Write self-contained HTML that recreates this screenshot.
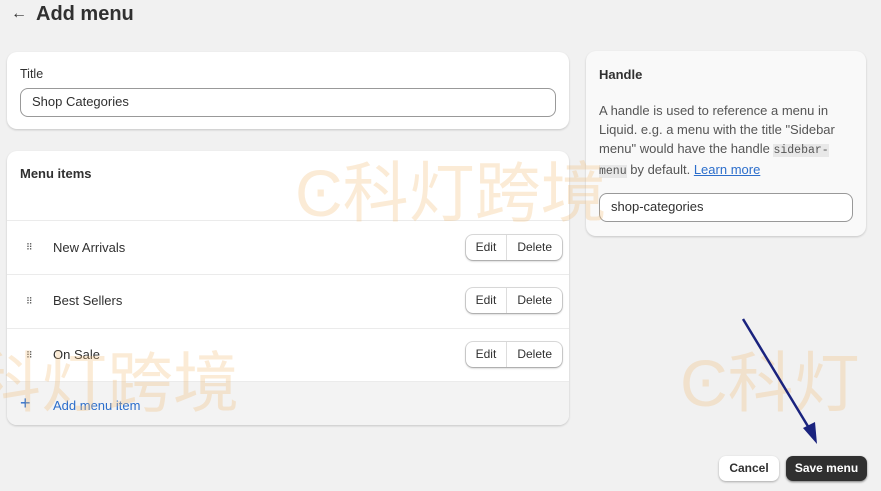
<!DOCTYPE html>
<html><head><style>
body{margin:0;width:881px;height:491px;background:#f1f1f1;font-family:"Liberation Sans","Noto Sans CJK SC",sans-serif;position:relative;overflow:hidden;color:#303030}
.a{position:absolute}
.card{position:absolute;background:#fff;border-radius:10px;box-shadow:0 1px 2px rgba(0,0,0,.18)}
.inp{position:absolute;border:1px solid #999;border-radius:8px;font-size:13px;box-sizing:border-box;padding-left:11px;line-height:26px}
.row{position:absolute;left:0;right:0;height:53px;border-top:1px solid #ebebeb;font-size:13px}
.btns{position:absolute;right:7px;top:14px;height:25px;border-radius:7px;box-shadow:0 1px 2px rgba(0,0,0,.3),0 0 0 1px #ddd;display:flex;font-size:12px;background:#fff}
.btns span{line-height:25px;padding:0 10px}
.btns span+span{border-left:1px solid #ddd}
.grip{position:absolute;left:19px;top:24px;font-size:9px;color:#555;line-height:4px}
.wm{position:absolute;color:rgba(243,190,120,.3);font-size:66px;font-family:"Noto Sans CJK SC",sans-serif;white-space:nowrap}
</style></head><body>
<div class="a" style="left:11px;top:5px;font-size:16px">←</div>
<div class="a" style="left:36px;top:3px;font-size:20px;font-weight:bold">Add menu</div>

<div class="card" style="left:7px;top:52px;width:562px;height:77px">
<div class="a" style="left:13px;top:15px;font-size:12.5px">Title</div>
<div class="inp" style="left:13px;top:36px;width:536px;height:29px">Shop Categories</div>
</div>

<div class="card" style="left:7px;top:151px;width:562px;height:274px;overflow:hidden">
<div class="a" style="left:13px;top:15px;font-size:13px;font-weight:bold">Menu items</div>
<div class="row" style="top:69px"><div class="grip">⠿</div><div class="a" style="left:46px;top:19px">New Arrivals</div><div class="btns"><span>Edit</span><span>Delete</span></div></div>
<div class="row" style="top:123px"><div class="grip">⠿</div><div class="a" style="left:46px;top:18px">Best Sellers</div><div class="btns" style="top:13px"><span>Edit</span><span>Delete</span></div></div>
<div class="row" style="top:177px"><div class="grip">⠿</div><div class="a" style="left:46px;top:18px">On Sale</div><div class="btns" style="top:13px"><span>Edit</span><span>Delete</span></div></div>
<div class="a" style="left:0;right:0;top:230px;height:44px;background:#f3f3f3;border-top:1px solid #ebebeb">
<div class="a" style="left:13px;top:11px;font-size:18px;color:#2c6ecb">+</div>
<div class="a" style="left:46px;top:16px;font-size:13px;color:#2c6ecb">Add menu item</div></div>
</div>

<div class="card" style="left:586px;top:51px;width:280px;height:185px;background:#f9f9f9">
<div class="a" style="left:13px;top:16px;font-size:13px;font-weight:bold">Handle</div>
<div class="a" style="left:13px;top:50px;width:265px;font-size:13px;line-height:19px;color:#555">A handle is used to reference a menu in<br>Liquid. e.g. a menu with the title "Sidebar<br>menu" would have the handle <code style="background:#e8e8e8;font-family:'Liberation Mono',monospace;font-size:11.5px">sidebar-</code><br><code style="background:#e8e8e8;font-family:'Liberation Mono',monospace;font-size:11.5px">menu</code> by default. <span style="color:#2c6ecb;text-decoration:underline">Learn more</span></div>
<div class="inp" style="left:13px;top:142px;width:254px;height:29px;background:#fff">shop-categories</div>
</div>

<div class="a" style="left:719px;top:456px;width:60px;height:25px;background:#fff;border-radius:7px;box-shadow:0 1px 2px rgba(0,0,0,.3);font-size:12px;font-weight:bold;text-align:center;line-height:25px">Cancel</div>
<div class="a" style="left:786px;top:456px;width:81px;height:25px;background:#303030;color:#fff;border-radius:7px;box-shadow:0 1px 2px rgba(0,0,0,.5);font-size:12px;font-weight:bold;text-align:center;line-height:25px">Save menu</div>

<div class="wm" style="left:295px;top:140px">Ͼ科灯跨境</div>
<div class="wm" style="left:-25px;top:330px">科灯跨境</div>
<div class="wm" style="left:680px;top:330px">Ͼ科灯</div>

<svg class="a" style="left:0;top:0" width="881" height="491"><line x1="743" y1="319" x2="812" y2="433" stroke="#1a237e" stroke-width="2.5"/><polygon points="817,444 803,428 815,422" fill="#1a237e"/></svg>
</body></html>
